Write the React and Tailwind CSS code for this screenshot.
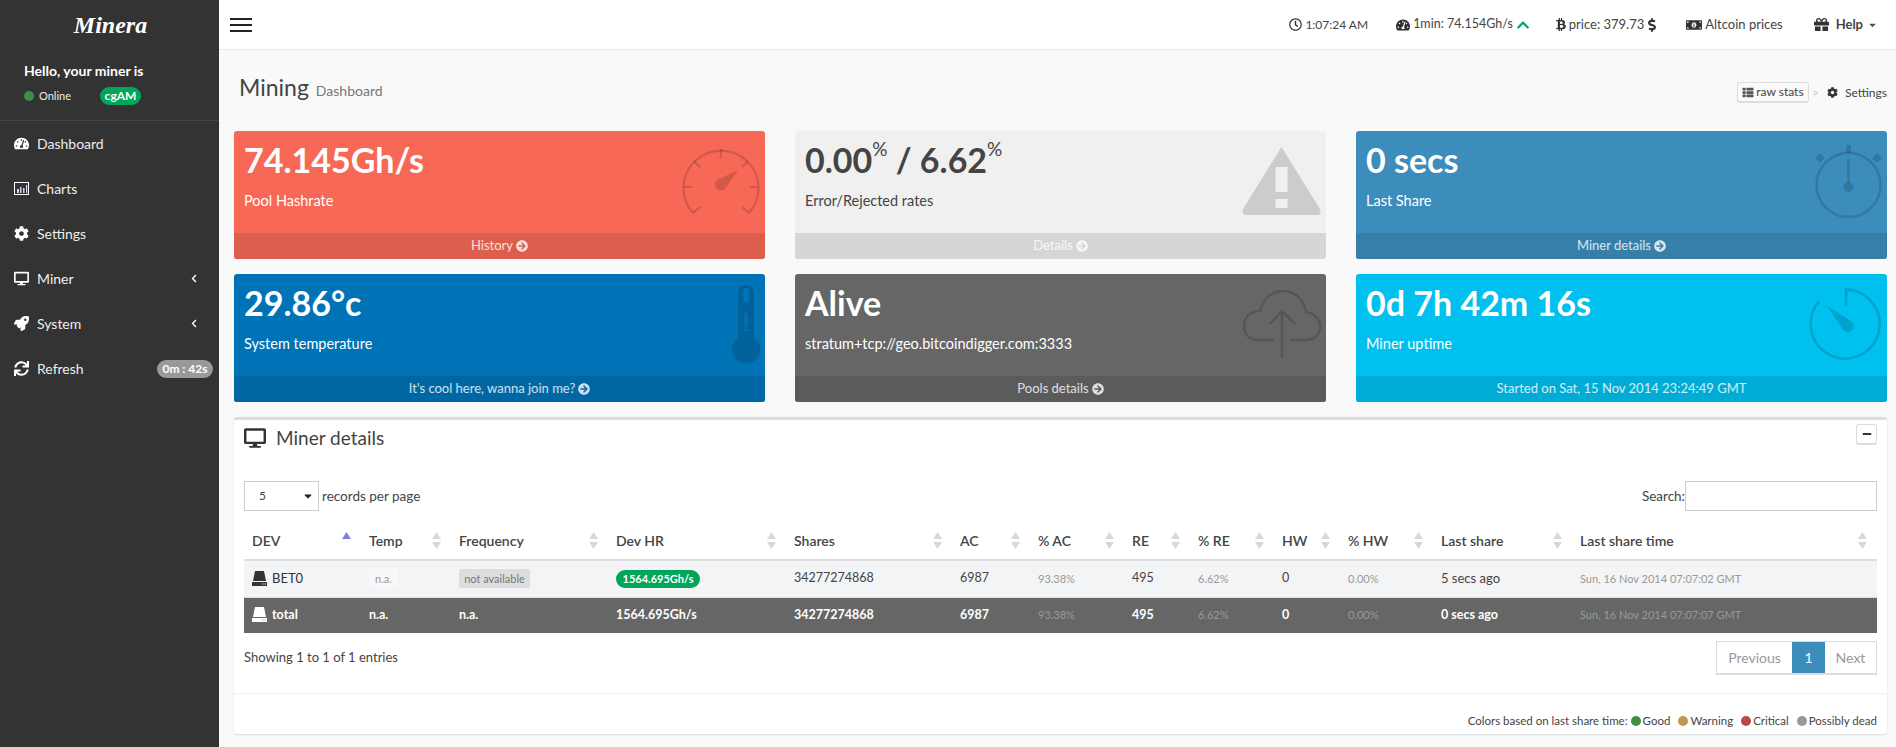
import {
  FaTachometerAlt, FaCog, FaDesktop, FaRocket, FaSync, FaChevronLeft, FaRegClock,
  FaChevronUp, FaBtc, FaDollarSign, FaMoneyBillAlt, FaGift, FaCaretDown, FaThList, FaArrowCircleRight, FaMinus,
} from 'react-icons/fa'

const font = { fontFamily: 'Lato, "Noto Sans", sans-serif' }

const Gauge = () => (
  <svg width="78" height="68" viewBox="0 0 78 68" fill="none" stroke="currentColor" strokeWidth="2.2">
    <path d="M11 66 A37.5 37.5 0 1 1 67 66" />
    <path d="M39 2v9M2 40h8M68 40h8M12 14l6 6M66 14l-6 6M11 66l7-6M67 66l-7-6" />
    <path d="M56 23 L43 42 A6 6 0 1 1 35 33 Z" fill="currentColor" stroke="none" />
  </svg>
)

const Warning = () => (
  <svg width="79" height="68" viewBox="0 0 79 68" fill="currentColor">
    <path fillRule="evenodd" d="M39.5 0 L78 62 Q80 68 74 68 H5 Q-1 68 1 62 Z M33.5 20 V45 H45.5 V20 Z M33.5 52 V61 H45.5 V52 Z" />
  </svg>
)

const Stopwatch = () => (
  <svg width="67" height="73" viewBox="0 0 67 73" fill="none" stroke="currentColor" strokeWidth="2.5">
    <circle cx="33.5" cy="40" r="32" />
    <path d="M33.5 14v24" />
    <circle cx="33.5" cy="42" r="5" fill="currentColor" stroke="none" />
    <path d="M31 0h5v8h-5zM5 8l5 5-5 5-5-5zM62 8l5 5-5 5-5-5z" fill="currentColor" stroke="none" />
  </svg>
)

const Thermometer = () => (
  <svg width="28" height="79" viewBox="0 0 28 79" fill="currentColor">
    <path fillRule="evenodd" d="M6 53 V8 A8 8 0 0 1 22 8 V53 A14 14 0 1 1 6 53 Z M11 6 V17 H17 V6 A3 3 0 0 0 11 6 Z M12.5 28 V42 H15.5 V28 Z M12.5 44 V46 H15.5 V44 Z" />
  </svg>
)

const CloudUp = () => (
  <svg width="78" height="68" viewBox="0 0 78 68" fill="none" stroke="currentColor" strokeWidth="2.5">
    <path d="M31 50 H16 C6 50 1 44 1 36 C1 27 8 21 17 21 C20 8 30 1 40 1 C52 1 61 10 63 22 C71 23 77 29 77 37 C77 45 71 50 62 50 H47" />
    <path d="M39 68 V21 M27 34 L39 21 L52 34" />
  </svg>
)

const Timer = () => (
  <svg width="73" height="72" viewBox="0 0 73 72" fill="none" stroke="currentColor" strokeWidth="2.5">
    <path d="M37 18 V1.5 A34.5 34.5 0 1 1 10.5 13" />
    <path d="M18 18 L42 33 A6 6 0 1 1 33.5 41 Z" fill="currentColor" stroke="none" />
  </svg>
)

const Drive = ({ dot }) => (
  <svg width="15" height="16" viewBox="0 0 15 16" fill="currentColor" className="shrink-0">
    <path d="M3 0h9l2 10H1z" />
    <path d="M0 11h15v4H0z" />
    <path d="M10 12.5h1.5v1H10zM12.5 12.5H14v1h-1.5z" fill={dot} />
  </svg>
)

const ChartIcon = ({ className }) => (
  <svg viewBox="0 0 15 13" fill="none" className={className}>
    <rect x="0.5" y="0.5" width="14" height="12" stroke="#ffffff" />
    <path d="M3 7h2v4H3zM6 5h1.5v6H6zM9 6h1.5v5H9zM12 3h1.2v8H12z" fill="#d8d0f0" />
  </svg>
)

const Sort = ({ active }) => (
  <svg width="9" height="17" viewBox="0 0 9 17" className="shrink-0">
    {active ? (
      <path d="M4.5 0 9 7H0z" fill="#8080dd" />
    ) : (
      <path d="M4.5 0 9 7H0zM0 10h9l-4.5 7z" fill="#d8d8d8" />
    )}
  </svg>
)

const menu = [
  { icon: FaTachometerAlt, label: 'Dashboard' },
  { icon: ChartIcon, label: 'Charts' },
  { icon: FaCog, label: 'Settings' },
  { icon: FaDesktop, label: 'Miner', more: true },
  { icon: FaRocket, label: 'System', more: true },
  { icon: FaSync, label: 'Refresh', badge: '0m : 42s' },
]

const Sup = () => <sup className="text-[19px] font-normal align-[8px] leading-none">%</sup>

const boxes = [
  { value: '74.145Gh/s', label: 'Pool Hashrate', link: 'History', bg: 'bg-[#f76856] text-white', foot: 'bg-[#dc5e4d]', Icon: Gauge, iconPos: 'top-[16px] right-[5px]' },
  { value: <>0.00<Sup /> / 6.62<Sup /></>, label: 'Error/Rejected rates', link: 'Details', bg: 'bg-[#f0f0f0] text-[#444444]', foot: 'bg-[#d6d6d6]', Icon: Warning, iconPos: 'top-[16px] right-[5px]' },
  { value: '0 secs', label: 'Last Share', link: 'Miner details', bg: 'bg-[#3c8dbc] text-white', foot: 'bg-[#367fa9]', Icon: Stopwatch, iconPos: 'top-[14px] right-[5px]' },
  { value: '29.86°c', label: 'System temperature', link: "It's cool here, wanna join me?", bg: 'bg-[#0073b7] text-white', foot: 'bg-[#0067a4]', Icon: Thermometer, iconPos: 'top-[11px] right-[5px]' },
  { value: 'Alive', label: 'stratum+tcp://geo.bitcoindigger.com:3333', link: 'Pools details', bg: 'bg-[#666666] text-white', foot: 'bg-[#5b5b5b]', Icon: CloudUp, iconPos: 'top-[16px] right-[5px]' },
  { value: '0d 7h 42m 16s', label: 'Miner uptime', link: 'Started on Sat, 15 Nov 2014 23:24:49 GMT', bg: 'bg-[#00c0ef] text-white', foot: 'bg-[#00acd6]', Icon: Timer, iconPos: 'top-[14px] right-[5px]', noArrow: true },
]

const columns = [
  ['DEV', 'w-[117px]'], ['Temp', 'w-[90px]'], ['Frequency', 'w-[157px]'], ['Dev HR', 'w-[178px]'], ['Shares', 'w-[166px]'],
  ['AC', 'w-[78px]'], ['% AC', 'w-[94px]'], ['RE', 'w-[66px]'], ['% RE', 'w-[84px]'], ['HW', 'w-[66px]'],
  ['% HW', 'w-[93px]'], ['Last share', 'w-[139px]'], ['Last share time', 'w-[305px]'],
]

const Sidebar = () => (
  <aside className="w-[219px] shrink-0 bg-[#333333] text-[#eeeeee]">
    <div className="h-[49px] flex items-center justify-center pl-[2px]">
      <span className="text-white text-[24px] font-bold italic" style={{ fontFamily: '"Liberation Serif", serif' }}>Minera</span>
    </div>
    <div className="h-[72px] border-b border-[#444444] pl-[24px] pr-[78px]">
      <p className="w-[117px] text-[14px] font-bold text-white leading-[18px] pt-[13px] whitespace-nowrap">Hello, your miner is</p>
      <div className="w-[117px] flex items-center justify-between mt-[7px]">
        <span className="flex items-center gap-[5px] text-[11px]">
          <span className="w-[10px] h-[10px] rounded-full bg-[#3f8f47]" />
          Online
        </span>
        <span className="h-[18px] w-[41px] rounded-full bg-[#00a65a] text-white text-[12px] font-bold flex items-center justify-center">cgAM</span>
      </div>
    </div>
    <ul>
      {menu.map(({ icon: Icon, label, more, badge }) => (
        <li key={label} className="h-[45px] flex items-center pl-[14px] pr-[6px] text-[14px]">
          <Icon className="w-[15px] h-[15px] text-white shrink-0" />
          <span className="ml-[8px]">{label}</span>
          {more && <FaChevronLeft className="ml-auto mr-[15px] w-[8px] h-[9px] text-white" />}
          {badge && <span className="ml-auto h-[18px] w-[56px] rounded-full bg-[#999999] text-white text-[12px] font-bold flex items-center justify-center">{badge}</span>}
        </li>
      ))}
    </ul>
  </aside>
)

const Header = () => (
  <header className="h-[50px] shrink-0 bg-white border-b border-[#e8e8e8] flex items-center pl-[11px] pr-[19px] text-[13px] text-[#444444]">
    <div className="w-[22px] flex flex-col gap-[4px]">
      <span className="h-[2px] bg-[#222222]" />
      <span className="h-[2px] bg-[#222222]" />
      <span className="h-[2px] bg-[#222222]" />
    </div>
    <div className="ml-auto flex items-center">
      <FaRegClock className="w-[13px] h-[13px] text-[#333333]" />
      <span className="ml-[3px] text-[12px]">1:07:24 AM</span>
      <FaTachometerAlt className="ml-[28px] w-[14px] h-[14px] text-[#333333]" />
      <span className="ml-[3px] text-[12.5px]">1min: 74.154Gh/s</span>
      <FaChevronUp className="ml-[3px] w-[14px] h-[14px] text-[#00a65a]" />
      <FaBtc className="ml-[26px] w-[10px] h-[13px] text-[#333333]" />
      <span className="ml-[3px]">price: 379.73</span>
      <FaDollarSign className="ml-[4px] w-[8px] h-[14px] text-[#333333]" />
      <FaMoneyBillAlt className="ml-[30px] w-[16px] h-[14px] text-[#333333]" />
      <span className="ml-[3px]">Altcoin prices</span>
      <FaGift className="ml-[31px] w-[15px] h-[15px] text-[#333333]" />
      <span className="ml-[7px] font-bold">Help</span>
      <FaCaretDown className="ml-[5px] w-[9px] h-[10px] text-[#555555]" />
    </div>
  </header>
)

const StatBox = ({ value, label, link, bg, foot, Icon, iconPos, noArrow }) => (
  <div className={`relative h-[128px] rounded-[3px] overflow-hidden flex flex-col ${bg}`}>
    <div className="flex-1 pl-[10px] pt-[8px]">
      <div className="text-[34px] leading-[42px] font-bold">{value}</div>
      <div className="mt-[11px] text-[14.5px] leading-[18px]">{label}</div>
    </div>
    <div className={`absolute text-black/15 ${iconPos}`}><Icon /></div>
    <div className={`h-[26px] flex items-center justify-center gap-[3px] text-[13px] text-white/80 ${foot}`}>
      {link}
      {!noArrow && <FaArrowCircleRight className="w-[12px] h-[12px]" />}
    </div>
  </div>
)

const MinerTable = () => (
  <table className="mt-[8px] w-[1633px] table-fixed border-collapse text-[13px] text-[#444444]">
    <thead>
      <tr className="h-[41px] border-b-2 border-[#dddde0]">
        {columns.map(([name, width], i) => (
          <th key={name} className={`${width} px-[8px] pt-[3px] text-[14px] font-semibold text-left`}>
            <div className="flex items-center justify-between pr-[2px]">
              <span>{name}</span>
              <Sort active={i === 0} />
            </div>
          </th>
        ))}
      </tr>
    </thead>
    <tbody>
      <tr className="h-[37px] bg-[#f3f4f5] border-b border-[#dddddd]">
        <td className="px-[8px]"><span className="flex items-center gap-[5px] text-[#333333]"><Drive dot="#f3f4f5" />BET0</span></td>
        <td className="px-[8px]"><span className="inline-block w-[29px] h-[19px] leading-[19px] text-center rounded-[2px] bg-[#f8f8f8] text-[11px] text-[#999999]">n.a.</span></td>
        <td className="px-[8px]"><span className="inline-block w-[71px] h-[19px] leading-[19px] text-center rounded-[2px] bg-[#dddddd] text-[11px] text-[#777777]">not available</span></td>
        <td className="px-[8px]"><span className="inline-block w-[84px] h-[18px] leading-[18px] text-center rounded-full bg-[#00a65a] text-[11px] font-bold text-white">1564.695Gh/s</span></td>
        <td className="px-[8px] text-[12.5px]">34277274868</td>
        <td className="px-[8px] text-[12.5px]">6987</td>
        <td className="px-[8px] text-[11px] text-[#999999]">93.38%</td>
        <td className="px-[8px] text-[12.5px]">495</td>
        <td className="px-[8px] text-[11px] text-[#999999]">6.62%</td>
        <td className="px-[8px] text-[12.5px]">0</td>
        <td className="px-[8px] text-[11px] text-[#999999]">0.00%</td>
        <td className="px-[8px]">5 secs ago</td>
        <td className="px-[8px] text-[11px] text-[#999999]">Sun, 16 Nov 2014 07:07:02 GMT</td>
      </tr>
      <tr className="h-[36px] bg-[#666666] text-white text-[12.5px] font-bold">
        <td className="px-[8px]"><span className="flex items-center gap-[5px]"><Drive dot="#e0b040" />total</span></td>
        <td className="px-[8px]">n.a.</td>
        <td className="px-[8px]">n.a.</td>
        <td className="px-[8px]">1564.695Gh/s</td>
        <td className="px-[8px]">34277274868</td>
        <td className="px-[8px]">6987</td>
        <td className="px-[8px] text-[11px] font-normal text-[#999999]">93.38%</td>
        <td className="px-[8px]">495</td>
        <td className="px-[8px] text-[11px] font-normal text-[#999999]">6.62%</td>
        <td className="px-[8px]">0</td>
        <td className="px-[8px] text-[11px] font-normal text-[#999999]">0.00%</td>
        <td className="px-[8px]">0 secs ago</td>
        <td className="px-[8px] text-[11px] font-normal text-[#999999]">Sun, 16 Nov 2014 07:07:07 GMT</td>
      </tr>
    </tbody>
  </table>
)

const DetailsPanel = () => (
  <section className="mt-[15px] bg-white border-t-[3px] border-[#dddddd] rounded-[3px] shadow-[0_1px_2px_rgba(0,0,0,0.12)]">
    <div className="h-[61px] flex items-start justify-between px-[10px]">
      <div className="flex items-center h-[36px] text-[#444444]">
        <FaDesktop className="w-[22px] h-[20px] text-[#333333]" />
        <h3 className="ml-[10px] text-[19px]">Miner details</h3>
      </div>
      <button className="mt-[4px] w-[21px] h-[21px] flex items-center justify-center bg-white border border-[#dddddd] border-b-2 rounded-[3px]">
        <FaMinus className="w-[10px] h-[10px] text-[#333333]" />
      </button>
    </div>
    <div className="px-[10px]">
      <div className="h-[30px] flex items-center justify-between text-[13.5px] text-[#444444]">
        <div className="flex items-center gap-[3px]">
          <div className="w-[75px] h-[30px] border border-[#cccccc] flex items-center justify-between pl-[14px] pr-[5px] text-[12px]">
            5
            <FaCaretDown className="w-[10px] h-[12px] text-[#222222]" />
          </div>
          records per page
        </div>
        <div className="flex items-center">
          Search:
          <div className="w-[192px] h-[30px] border border-[#cccccc]" />
        </div>
      </div>
      <MinerTable />
      <div className="flex justify-between pt-[8px] pb-[18px] text-[13px]">
        <span className="pt-[7px] text-[#444444]">Showing 1 to 1 of 1 entries</span>
        <div className="flex h-[34px] border border-[#dddddd] border-b-2 text-[14px] text-[#999999]">
          <span className="w-[75px] flex items-center justify-center">Previous</span>
          <span className="w-[33px] flex items-center justify-center bg-[#3c8dbc] text-white">1</span>
          <span className="w-[51px] flex items-center justify-center">Next</span>
        </div>
      </div>
    </div>
    <div className="h-[41px] border-t border-[#f0f0f0] flex items-center justify-end pt-[13px] pr-[10px] text-[11.5px] text-[#444444]">
      Colors based on last share time:
      <span className="ml-[3px] w-[10px] h-[10px] rounded-full bg-[#3f8f47]" /><span className="ml-[2px]">Good</span>
      <span className="ml-[8px] w-[10px] h-[10px] rounded-full bg-[#c09853]" /><span className="ml-[2px]">Warning</span>
      <span className="ml-[8px] w-[10px] h-[10px] rounded-full bg-[#b94a48]" /><span className="ml-[2px]">Critical</span>
      <span className="ml-[8px] w-[10px] h-[10px] rounded-full bg-[#999999]" /><span className="ml-[2px]">Possibly dead</span>
    </div>
  </section>
)

const App = () => (
  <div className="flex min-h-screen h-[747px] overflow-hidden bg-[#f9f9f9]" style={font}>
    <Sidebar />
    <div className="flex-1 min-w-0 flex flex-col">
      <Header />
      <main className="pl-[15px] pr-[9px]">
        <div className="h-[81px] flex items-start justify-between">
          <div className="flex items-baseline pl-[5px] pt-[22px] text-[#444444]">
            <h1 className="text-[23px] leading-[30px]">Mining</h1>
            <span className="ml-[7px] text-[14px] text-[#777777]">Dashboard</span>
          </div>
          <div className="flex items-center pt-[32px] text-[12px] text-[#444444]">
            <span className="h-[21px] w-[72px] flex items-center justify-center gap-[2px] bg-[#fafafa] border border-[#dddddd] border-b-2 rounded-[3px]">
              <FaThList className="w-[12px] h-[11px] text-[#555555]" />raw stats
            </span>
            <span className="ml-[3px] mr-[8px] text-[#cccccc]">&gt;</span>
            <FaCog className="w-[11px] h-[11px] text-[#333333]" />
            <span className="ml-[7px]">Settings</span>
          </div>
        </div>
        <div className="grid grid-cols-3 gap-x-[30px] gap-y-[15px]">
          {boxes.map((box) => <StatBox key={box.label} {...box} />)}
        </div>
        <DetailsPanel />
      </main>
    </div>
  </div>
)

export default App
